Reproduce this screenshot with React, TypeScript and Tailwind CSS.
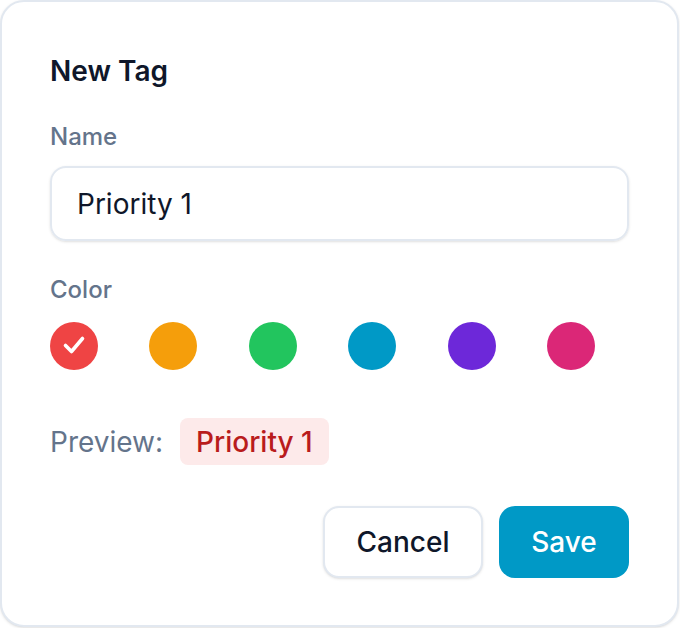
const COLORS = ['#ef4444', '#f59e0b', '#22c55e', '#0099c6', '#6d28d9', '#db2777'];

export default function App() {
  const selected = 0;
  const name = 'Priority 1';

  return (
    <div className="w-[680px] h-[628px] bg-white" style={{ fontFamily: 'Inter, "Noto Sans", sans-serif' }}>
      <div className="w-[679px] h-[627px] rounded-[24px] border-2 border-[#e2e8f0] bg-white px-[48px] pt-[51px] shadow-sm">
        {/* 제목 */}
        <h1 className="text-[28px] leading-[36px] font-semibold text-[#0f172a]">New Tag</h1>

        {/* 이름 */}
        <label className="block mt-[34px] text-[24px] leading-[28px] font-medium text-[#64748b]">Name</label>
        <div className="mt-[15px] h-[75px] rounded-[16px] border-2 border-[#e2e8f0] shadow-sm flex items-center px-[25px]">
          <span className="text-[28px] text-[#0f172a]">{name}</span>
        </div>

        {/* 색상 */}
        <label className="block mt-[35px] text-[24px] leading-[28px] font-medium text-[#64748b]">Color</label>
        <div className="mt-[18px] flex gap-[51.4px]">
          {COLORS.map((c, i) => (
            <div
              key={c}
              className="w-[48px] h-[48px] rounded-full"
              style={{ backgroundColor: c }}
            >
              {i === selected && (
                <svg width="48" height="48" viewBox="0 0 48 48" fill="none" stroke="white" strokeWidth="3.6" strokeLinecap="round" strokeLinejoin="round">
                  <path d="M15.5 23.5L21.5 29.5L32.5 16.5" />
                </svg>
              )}
            </div>
          ))}
        </div>

        {/* 미리보기 */}
        <div className="mt-[48px] flex items-center gap-[17px]">
          <span className="text-[28px] text-[#64748b]">Preview:</span>
          <span className="h-[47px] px-[16px] rounded-[8px] bg-[#fdeaea] text-[#b91c1c] text-[28px] font-medium flex items-center">
            {name}
          </span>
        </div>

        {/* 버튼 */}
        <div className="mt-[41px] flex justify-end gap-[16px]">
          <button className="h-[72px] w-[160px] rounded-[16px] border-2 border-[#e2e8f0] bg-white text-[28px] font-medium text-[#0f172a] shadow-sm">
            Cancel
          </button>
          <button className="h-[72px] w-[130px] rounded-[16px] bg-[#0099c6] text-[28px] font-medium text-white">
            Save
          </button>
        </div>
      </div>
    </div>
  );
}
